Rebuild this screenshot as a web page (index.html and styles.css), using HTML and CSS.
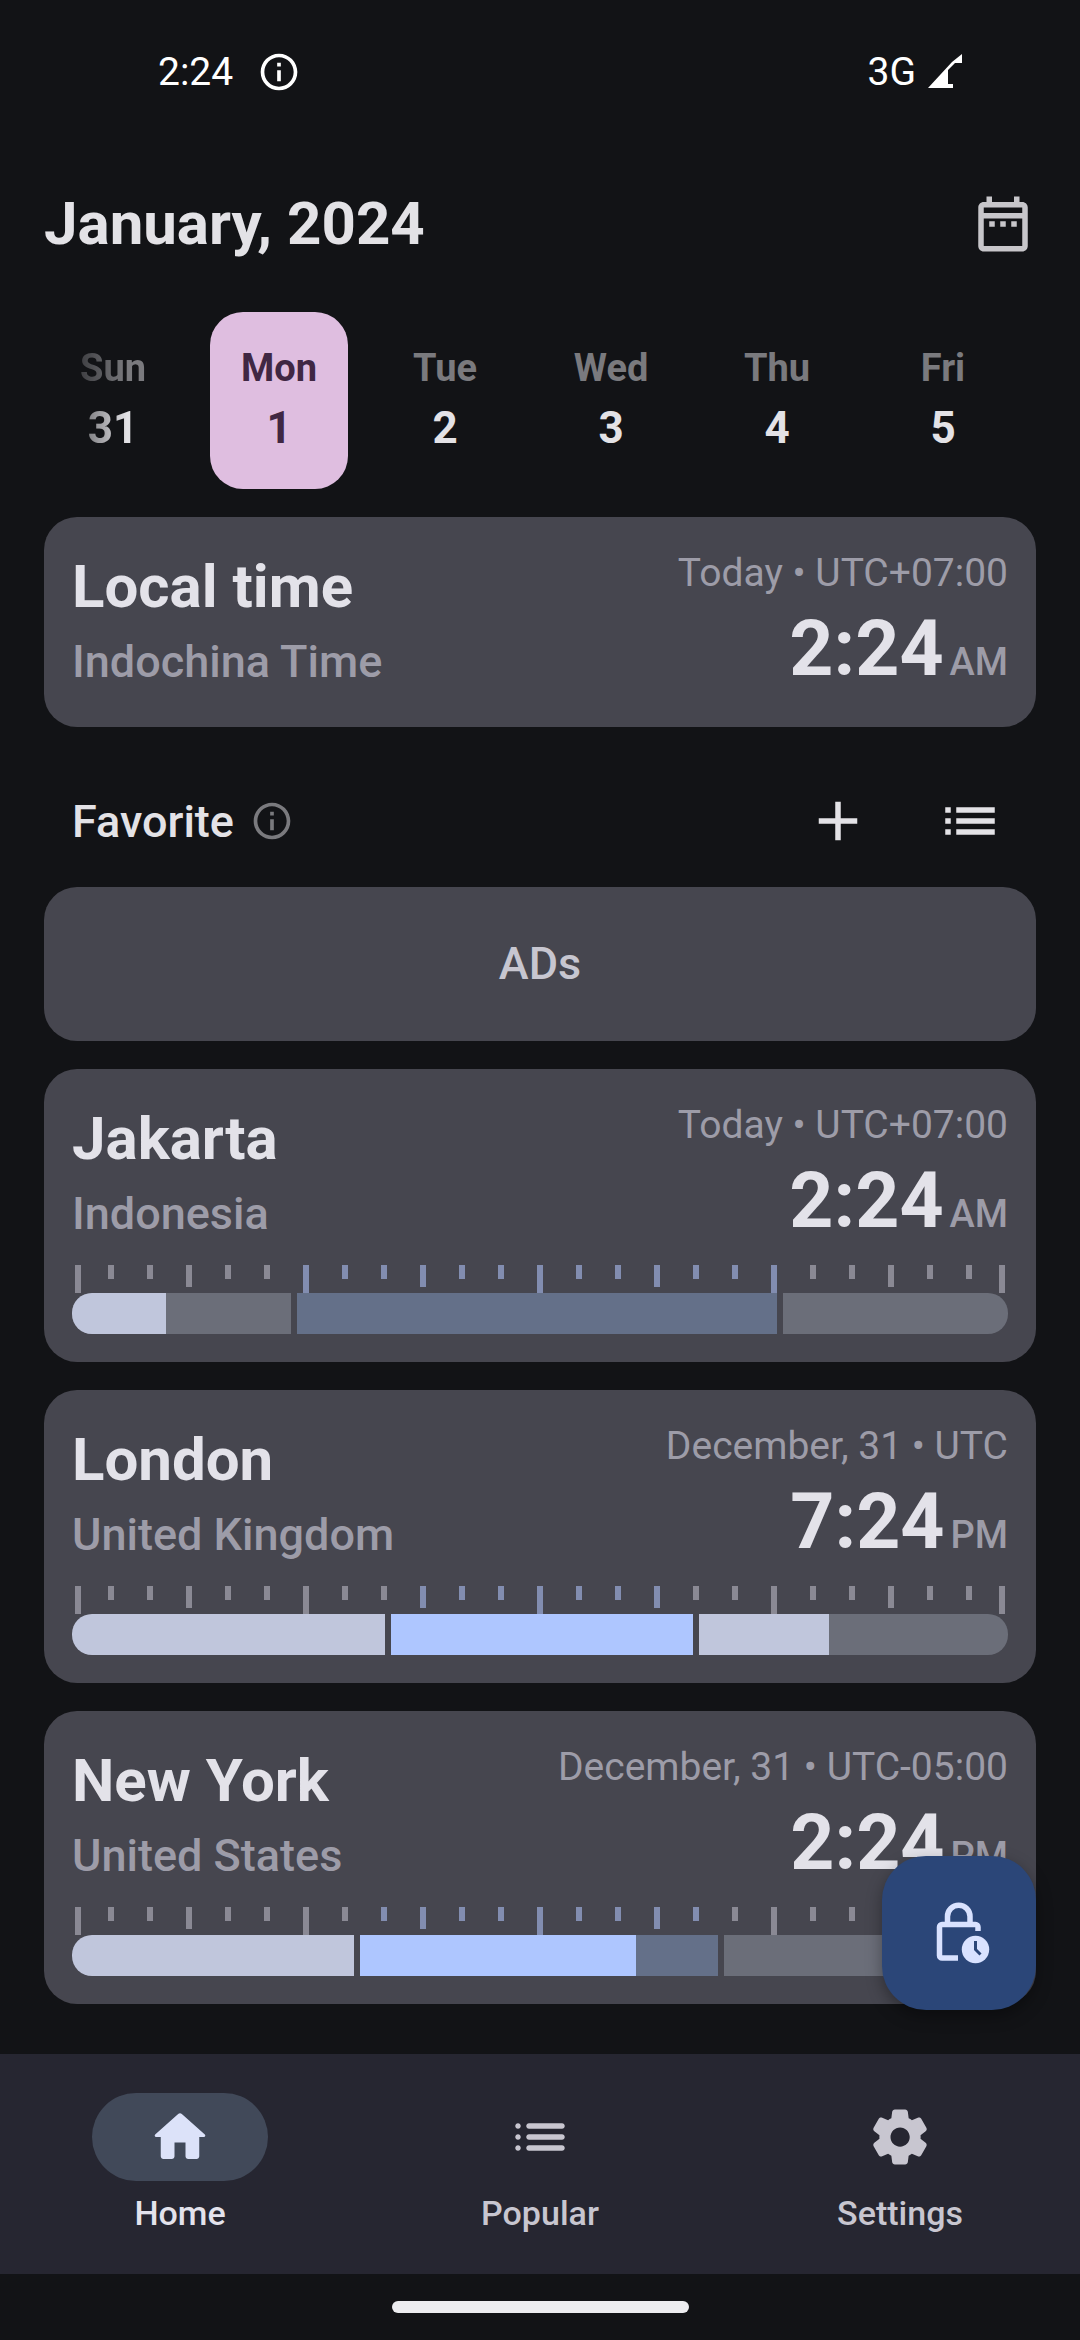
FILE: index.html
```html
<!DOCTYPE html>
<html lang="en">
<head>
<meta charset="utf-8">
<meta name="viewport" content="width=device-width, initial-scale=1">
<title>World clock</title>
<link rel="stylesheet" href="styles.css">
</head>
<body>
<header class="status">
  <span class="status-side">2:24
    <svg class="icon-s" viewBox="0 0 24 24" aria-hidden="true"><path d="M11 7h2v2h-2zm0 4h2v6h-2zm1-9C6.480 2 2 6.480 2 12s4.480 10 10 10 10-4.480 10-10S17.520 2 12 2zm0 18c-4.410 0-8-3.590-8-8s3.590-8 8-8 8 3.590 8 8-3.590 8-8 8z"/></svg>
  </span>
  <span class="status-side status-net">3G
    <svg class="signal" viewBox="0 0 34 34" aria-hidden="true"><path d="M0 34L24 8L34 0V9H27L20 16V30H25V34z"/></svg>
  </span>
</header>

<main class="page">
  <div class="month">
    <h1>January, 2024</h1>
    <button class="icon-button" aria-label="Pick a date"><svg class="icon" viewBox="0 0 24 24"><path d="M7 11h2v2H7v-2zm14-5v14c0 1.100-.9 2-2 2H5c-1.110 0-2-.9-2-2l.01-14c0-1.100.88-2 1.990-2h1V2h2v2h8V2h2v2h1c1.100 0 2 .9 2 2zM5 8h14V6H5v2zm14 12V10H5v10h14zm-4-7h2v-2h-2v2zm-4 0h2v-2h-2v2z"/></svg></button>
  </div>

  <div class="days">
    <button class="day"><span class="day-name">Sun</span><span class="day-num">31</span></button>
    <button class="day selected"><span class="day-name">Mon</span><span class="day-num">1</span></button>
    <button class="day"><span class="day-name">Tue</span><span class="day-num">2</span></button>
    <button class="day"><span class="day-name">Wed</span><span class="day-num">3</span></button>
    <button class="day"><span class="day-name">Thu</span><span class="day-num">4</span></button>
    <button class="day"><span class="day-name">Fri</span><span class="day-num">5</span></button>
  </div>

  <section class="card local">
    <div class="card-head">
      <div><h2>Local time</h2><p class="place">Indochina Time</p></div>
      <div class="when"><p class="date">Today • UTC+07:00</p><p class="time">2:24<small>AM</small></p></div>
    </div>
  </section>

  <div class="favorite">
    <h3>Favorite</h3>
    <svg class="icon-s" viewBox="0 0 24 24" aria-hidden="true"><path d="M11 7h2v2h-2zm0 4h2v6h-2zm1-9C6.480 2 2 6.480 2 12s4.480 10 10 10 10-4.480 10-10S17.520 2 12 2zm0 18c-4.410 0-8-3.590-8-8s3.590-8 8-8 8 3.590 8 8-3.590 8-8 8z"/></svg>
    <button class="tool" aria-label="Add"><svg class="icon" viewBox="0 0 24 24"><path d="M19 13h-6v6h-2v-6H5v-2h6V5h2v6h6v2z"/></svg></button>
    <button class="tool last" aria-label="Edit list"><svg class="icon" viewBox="0 0 24 24"><path d="M3 13h2v-2H3v2zm0 4h2v-2H3v2zm0-8h2V7H3v2zm4 4h14v-2H7v2zm0 4h14v-2H7v2zM7 7v2h14V7H7z"/></svg></button>
  </div>

  <div class="card ads">ADs</div>

  <section class="card">
    <div class="card-head">
      <div><h2>Jakarta</h2><p class="place">Indonesia</p></div>
      <div class="when"><p class="date">Today • UTC+07:00</p><p class="time">2:24<small>AM</small></p></div>
    </div>
    <svg class="ruler" viewBox="0 0 936 28" preserveAspectRatio="none" aria-hidden="true">
      <path class="tick" d="M6 0v28M39 0v14M78 0v14M117 0v22M156 0v14M195 0v14M741 0v14M780 0v14M819 0v22M858 0v14M897 0v14M930 0v28"/>
      <path class="tick work" d="M234 0v28M273 0v14M312 0v14M351 0v22M390 0v14M429 0v14M468 0v28M507 0v14M546 0v14M585 0v22M624 0v14M663 0v14M702 0v28"/>
    </svg>
    <div class="bar">
      <span class="seg" style="flex-grow:219"><span class="fill" style="width:43%"></span></span>
      <span class="seg work" style="flex-grow:480"></span>
      <span class="seg" style="flex-grow:225"></span>
    </div>
  </section>

  <section class="card">
    <div class="card-head">
      <div><h2>London</h2><p class="place">United Kingdom</p></div>
      <div class="when"><p class="date">December, 31 • UTC</p><p class="time">7:24<small>PM</small></p></div>
    </div>
    <svg class="ruler" viewBox="0 0 936 28" preserveAspectRatio="none" aria-hidden="true">
      <path class="tick" d="M6 0v28M39 0v14M78 0v14M117 0v22M156 0v14M195 0v14M234 0v28M273 0v14M312 0v14M624 0v14M663 0v14M702 0v28M741 0v14M780 0v14M819 0v22M858 0v14M897 0v14M930 0v28"/>
      <path class="tick work" d="M351 0v22M390 0v14M429 0v14M468 0v28M507 0v14M546 0v14M585 0v22"/>
    </svg>
    <div class="bar">
      <span class="seg" style="flex-grow:313"><span class="fill" style="width:100%"></span></span>
      <span class="seg work" style="flex-grow:302"><span class="fill" style="width:100%"></span></span>
      <span class="seg" style="flex-grow:309"><span class="fill" style="width:42%"></span></span>
    </div>
  </section>

  <section class="card">
    <div class="card-head">
      <div><h2>New York</h2><p class="place">United States</p></div>
      <div class="when"><p class="date">December, 31 • UTC-05:00</p><p class="time">2:24<small>PM</small></p></div>
    </div>
    <svg class="ruler" viewBox="0 0 936 28" preserveAspectRatio="none" aria-hidden="true">
      <path class="tick" d="M6 0v28M39 0v14M78 0v14M117 0v22M156 0v14M195 0v14M234 0v28M273 0v14M663 0v14M702 0v28M741 0v14M780 0v14M819 0v22M858 0v14M897 0v14M930 0v28"/>
      <path class="tick work" d="M312 0v14M351 0v22M390 0v14M429 0v14M468 0v28M507 0v14M546 0v14M585 0v22M624 0v14"/>
    </svg>
    <div class="bar">
      <span class="seg" style="flex-grow:282"><span class="fill" style="width:100%"></span></span>
      <span class="seg work" style="flex-grow:358"><span class="fill" style="width:77%"></span></span>
      <span class="seg" style="flex-grow:284"></span>
    </div>
  </section>
</main>

<footer class="bottom">
  <button class="fab" aria-label="Lock time">
    <svg viewBox="0 0 66 66" aria-hidden="true"><path class="line" d="M21.500 24V16.500a11.250 11.250 0 0 1 22.500 0V24M52 31V27a2.500 2.500 0 0 0-2.500-2.500H16a2.500 2.500 0 0 0-2.500 2.500V55.500a2.500 2.500 0 0 0 2.500 2.500H32"/><circle cx="49.500" cy="49.500" r="13.700"/><path class="hand" d="M49.500 41v8.500l5 5"/></svg>
  </button>
  <nav class="nav">
    <a class="nav-item active" href="#home"><span class="pill"><svg class="icon" viewBox="0 0 24 24"><path d="M10 19v-5h4v5c0 .55.45 1 1 1h3c.55 0 1-.45 1-1v-7h1.700c.46 0 .68-.57.33-.87L12.670 3.600c-.38-.34-.96-.34-1.340 0l-8.360 7.530c-.34.3-.13.87.33.87H5v7c0 .55.45 1 1 1h3c.55 0 1-.45 1-1z"/></svg></span>Home</a>
    <a class="nav-item" href="#popular"><span class="pill"><svg class="icon" viewBox="0 0 24 24"><path d="M4 13c.55 0 1-.45 1-1s-.45-1-1-1-1 .45-1 1 .45 1 1 1zm0 4c.55 0 1-.45 1-1s-.45-1-1-1-1 .45-1 1 .45 1 1 1zm0-8c.55 0 1-.45 1-1s-.45-1-1-1-1 .45-1 1 .45 1 1 1zm4 4h12c.55 0 1-.45 1-1s-.45-1-1-1H8c-.55 0-1 .45-1 1s.45 1 1 1zm0 4h12c.55 0 1-.45 1-1s-.45-1-1-1H8c-.55 0-1 .45-1 1s.45 1 1 1zM7 8c0 .55.45 1 1 1h12c.55 0 1-.45 1-1s-.45-1-1-1H8c-.55 0-1 .45-1 1z"/></svg></span>Popular</a>
    <a class="nav-item" href="#settings"><span class="pill"><svg class="icon" viewBox="0 0 24 24"><path d="M19.500 12c0-.23-.01-.45-.03-.68l1.860-1.410c.4-.3.51-.86.26-1.300l-1.870-3.230c-.25-.44-.79-.62-1.250-.42l-2.150.91c-.37-.26-.76-.49-1.170-.68l-.29-2.310c-.06-.5-.49-.88-.99-.88h-3.730c-.51 0-.94.38-1 .88l-.29 2.310c-.41.19-.8.42-1.170.68l-2.150-.91c-.46-.2-1-.02-1.250.42L2.410 8.620c-.25.44-.14.99.26 1.300l1.860 1.410c-.02.22-.03.44-.03.67s.01.45.03.68l-1.860 1.410c-.4.3-.51.86-.26 1.300l1.870 3.230c.25.44.79.62 1.250.42l2.150-.91c.37.26.76.49 1.170.68l.29 2.310c.06.5.49.88.99.88h3.730c.5 0 .93-.38.99-.88l.29-2.310c.41-.19.8-.42 1.170-.68l2.150.91c.46.2 1 .02 1.250-.42l1.870-3.230c.25-.44.14-.99-.26-1.300l-1.860-1.410c.03-.23.04-.45.04-.68zm-7.460 3.500c-1.930 0-3.500-1.570-3.500-3.500s1.570-3.500 3.500-3.500 3.500 1.570 3.500 3.500-1.570 3.500-3.500 3.500z"/></svg></span>Settings</a>
  </nav>
  <div class="gesture"><span></span></div>
</footer>
</body>
</html>
```
FILE: styles.css
```css
* { box-sizing: border-box; margin: 0; }
body {
  min-height: 100vh;
  display: flex;
  flex-direction: column;
  background: #121316;
  color: #e3e2e6;
  font-family: Roboto, sans-serif;
}
button { padding: 0; border: 0; background: none; color: inherit; font: inherit; }
svg { display: block; fill: currentColor; }
.icon { width: 66px; height: 66px; }
.icon-s { width: 44px; height: 44px; }

.status {
  display: flex;
  justify-content: space-between;
  align-items: flex-start;
  padding: 50px 118px 96px 158px;
  color: #fff;
  font-size: 39px;
  line-height: 44px;
}
.status-side { display: flex; gap: 24px; }
.status-net { gap: 12px; }
.signal { width: 34px; height: 34px; margin-top: 4px; }

.page { flex: 1; padding: 0 44px 21px; }
.month { display: flex; justify-content: space-between; align-items: center; }
.month h1 { font-size: 60px; line-height: 68px; }
.icon-button { color: #c7c6ca; }

.days {
  display: flex;
  gap: 28px;
  overflow: hidden;
  padding: 54px 0 28px;
}
.day {
  flex: 0 0 138px;
  display: flex;
  flex-direction: column;
  align-items: center;
  height: 177px;
  padding-top: 34px;
  border-radius: 33px;
  font-weight: 700;
}
.day-name { color: #7a7a7e; font-size: 38px; line-height: 44px; }
.day-num { font-size: 44px; line-height: 76px; }
.day:first-child { -webkit-mask-image: linear-gradient(90deg, transparent, #000 60%); mask-image: linear-gradient(90deg, transparent, #000 60%); }
.selected, .selected .day-name { color: #402743; }
.selected { background: #dfbee0; }

.card {
  margin-bottom: 28px;
  padding: 34px 28px 28px;
  border-radius: 33px;
  background: #46464f;
}
.card.local { margin-bottom: 0; padding-bottom: 33px; }
.card-head { display: flex; justify-content: space-between; }
.card h2 { color: #e3e2e9; font-size: 60px; line-height: 72px; }
.place { margin-top: 11px; color: #9d9ca8; font-size: 45px; font-weight: 500; line-height: 56px; }
.when { text-align: right; color: #9d9ca8; }
.date { font-size: 39px; line-height: 44px; }
.time { margin-top: 9px; color: #e3e2e9; font-size: 77px; font-weight: 700; line-height: 90px; }
.time small { margin-left: 6px; color: #9d9ca8; font-size: 38px; font-weight: 500; line-height: 38px; }

.favorite { display: flex; align-items: center; height: 132px; margin-top: 28px; padding-left: 28px; color: #7a7a7e; }
.favorite h3 { margin-right: 16px; color: #e3e2e6; font-size: 45px; font-weight: 500; }
.tool { display: grid; place-items: center; width: 132px; height: 132px; color: #e3e2e6; }
.favorite .icon-s + .tool { margin-left: auto; }
.card.ads { padding: 48px; color: #c7c6d0; font-size: 45px; font-weight: 500; line-height: 58px; text-align: center; }

.ruler { width: 100%; height: 28px; margin-top: 19px; }
.tick { fill: none; stroke: #8a8994; stroke-width: 6; }
.tick.work { stroke: #828db0; }
.bar { display: flex; gap: 6px; height: 41px; border-radius: 20px; overflow: hidden; }
.seg { flex: 1 1 0; background: #6b6e79; }
.seg.work { background: #647089; }
.fill { display: block; height: 100%; background: #c0c6dc; }
.work .fill { background: #aec6ff; }

.bottom { position: relative; }
.fab {
  position: absolute;
  right: 44px;
  bottom: 330px;
  display: grid;
  place-items: center;
  width: 154px;
  height: 154px;
  border-radius: 44px;
  background: #2b4678;
  color: #d9e2ff;
  box-shadow: 0 6px 16px rgba(0, 0, 0, .35);
}
.fab svg { width: 66px; height: 66px; }
.fab .line { fill: none; stroke: currentColor; stroke-width: 5.5; }
.fab .hand { fill: none; stroke: #2b4678; stroke-width: 3; }

.nav { display: grid; grid-template-columns: repeat(3, 1fr); height: 220px; background: #262631; }
.nav-item {
  display: flex;
  flex-direction: column;
  align-items: center;
  gap: 10px;
  padding-top: 39px;
  color: #c8c6d0;
  font-size: 34px;
  font-weight: 500;
  line-height: 44px;
  text-decoration: none;
}
.pill { display: grid; place-items: center; width: 176px; height: 88px; border-radius: 44px; }
.active { color: #e3e2ec; }
.active .pill { background: #414959; color: #dce2f9; }
.gesture { display: grid; place-items: center; height: 66px; }
.gesture span { width: 297px; height: 12px; border-radius: 6px; background: #ededf0; }
```
